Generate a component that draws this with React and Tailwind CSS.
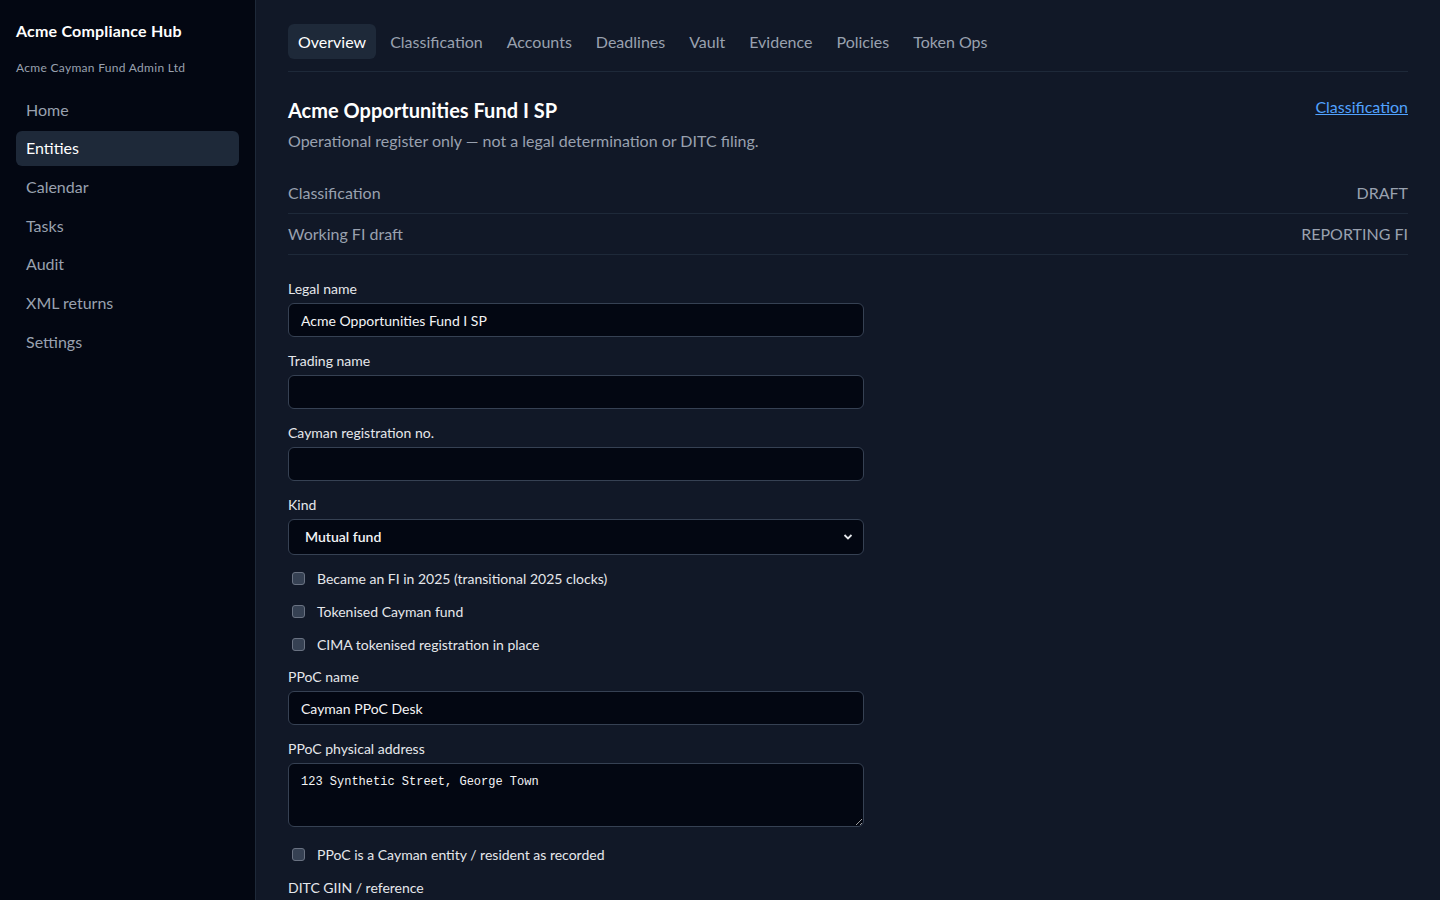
import React from 'react';

const navItems = ['Home', 'Entities', 'Calendar', 'Tasks', 'Audit', 'XML returns', 'Settings'];
const tabs = ['Overview', 'Classification', 'Accounts', 'Deadlines', 'Vault', 'Evidence', 'Policies', 'Token Ops'];

const Field = ({ label, value = '' }) => (
  <div>
    <label className="block text-sm leading-5 text-gray-200 mb-1">{label}</label>
    <input
      type="text"
      defaultValue={value}
      className="w-full h-[34px] px-3 text-sm text-gray-100 bg-[#030712] border border-gray-700 rounded-md outline-none"
    />
  </div>
);

const Check = ({ label, className = '' }) => (
  <label className={`flex items-center gap-3 text-sm leading-[19px] text-gray-200 pl-1 ${className}`}>
    <span className="w-[13px] h-[13px] rounded-[3px] bg-gray-700 border border-gray-500" />
    {label}
  </label>
);

export default function App() {
  return (
    <div className="flex min-h-screen bg-[#111827] text-gray-100" style={{ fontFamily: 'Lato, "Open Sans", sans-serif' }}>
      <aside className="w-64 shrink-0 bg-[#030712] border-r border-gray-800 px-4 pt-[19px]">
        <div className="text-base font-bold text-white leading-6 tracking-[0.2px]">Acme Compliance Hub</div>
        <div className="text-xs text-gray-400 mt-[17px] tracking-[0.3px]">Acme Cayman Fund Admin Ltd</div>
        <nav className="mt-4 flex flex-col gap-[3.7px]">
          {navItems.map(item => (
            <div
              key={item}
              className={`h-[35px] flex items-center px-2.5 rounded-md text-base ${item === 'Entities' ? 'bg-gray-800 text-white' : 'text-gray-400'}`}
            >
              {item}
            </div>
          ))}
        </nav>
      </aside>

      <main className="flex-1 px-8 pt-6">
        <div className="flex items-center gap-1 pb-3 border-b border-gray-800">
          {tabs.map(tab => (
            <div
              key={tab}
              className={`h-[35px] flex items-center px-2.5 rounded-md text-base ${tab === 'Overview' ? 'bg-gray-800 text-white' : 'text-gray-400'}`}
            >
              {tab}
            </div>
          ))}
        </div>

        <div className="flex items-start justify-between mt-6">
          <div>
            <h1 className="text-xl font-bold text-white leading-7">Acme Opportunities Fund I SP</h1>
            <p className="text-base text-gray-400 mt-[5px]">Operational register only — not a legal determination or DITC filing.</p>
          </div>
          <a className="text-base text-blue-400 underline -mt-px">Classification</a>
        </div>

        <div className="mt-5 text-base text-gray-400">
          <div className="flex justify-between h-[41px] items-center border-b border-gray-800">
            <span>Classification</span>
            <span>DRAFT</span>
          </div>
          <div className="flex justify-between h-[41px] items-center border-b border-gray-800">
            <span>Working FI draft</span>
            <span>REPORTING FI</span>
          </div>
        </div>

        <form className="max-w-xl mt-6 flex flex-col gap-3.5">
          <Field label="Legal name" value="Acme Opportunities Fund I SP" />
          <Field label="Trading name" />
          <Field label="Cayman registration no." />
          <div>
            <label className="block text-sm leading-5 text-gray-200 mb-1">Kind</label>
            <div className="relative">
              <select className="appearance-none w-full h-9 pl-4 text-sm font-semibold text-gray-100 bg-[#030712] border border-gray-700 rounded-md outline-none">
                <option>Mutual fund</option>
              </select>
              <svg className="absolute right-[11px] top-[14px] w-[10px] h-[8px] pointer-events-none" viewBox="0 0 10 8" fill="none">
                <path d="M1.5 2l3.5 3.5L8.5 2" stroke="#e5e7eb" strokeWidth="1.8" />
              </svg>
            </div>
          </div>
          <Check label="Became an FI in 2025 (transitional 2025 clocks)" />
          <Check label="Tokenised Cayman fund" />
          <Check label="CIMA tokenised registration in place" className="-mb-px" />
          <Field label="PPoC name" value="Cayman PPoC Desk" />
          <div>
            <label className="block text-sm leading-5 text-gray-200 mb-1">PPoC physical address</label>
            <textarea
              defaultValue="123 Synthetic Street, George Town"
              className="block w-full h-16 px-3 py-2.5 text-xs text-gray-100 bg-[#030712] border border-gray-700 rounded-md outline-none"
              style={{ fontFamily: '"Liberation Mono", monospace' }}
            />
          </div>
          <Check label="PPoC is a Cayman entity / resident as recorded" className="mt-[4px]" />
          <Field label="DITC GIIN / reference" />
        </form>
      </main>
    </div>
  );
}
